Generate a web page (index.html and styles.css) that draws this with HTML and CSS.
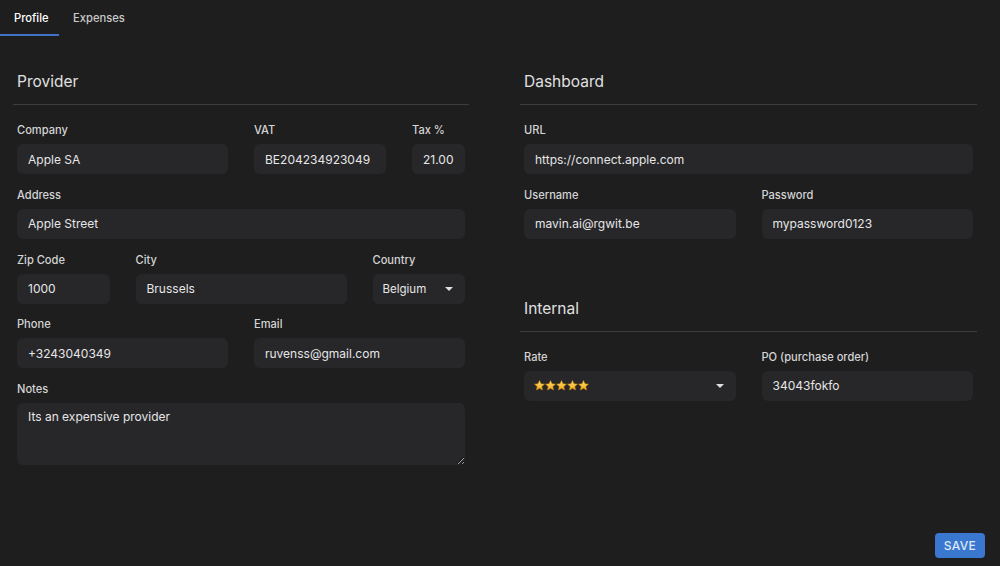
FILE: index.html
```html
<!DOCTYPE html>
<html lang="en">
<head>
<meta charset="utf-8">
<title>Provider</title>
<link rel="stylesheet" href="styles.css">
</head>
<body>
<div class="page">
  <nav class="tabs">
    <div class="tab active">Profile</div>
    <div class="tab">Expenses</div>
  </nav>

  <main class="content">
    <section class="panel">
      <h2 class="section-title">Provider</h2>
      <hr class="divider">
      <div class="grid">
        <div class="field span-6"><label>Company</label><input class="control" value="Apple SA"></div>
        <div class="field span-4"><label>VAT</label><input class="control" value="BE204234923049"></div>
        <div class="field span-2"><label>Tax %</label><input class="control" value="21.00"></div>

        <div class="field span-12"><label>Address</label><input class="control" value="Apple Street"></div>

        <div class="field span-3"><label>Zip Code</label><input class="control" value="1000"></div>
        <div class="field span-6"><label>City</label><input class="control" value="Brussels"></div>
        <div class="field span-3"><label>Country</label>
          <div class="control select"><span>Belgium</span><span class="caret"></span></div>
        </div>

        <div class="field span-6"><label>Phone</label><input class="control" value="+3243040349"></div>
        <div class="field span-6"><label>Email</label><input class="control" value="ruvenss@gmail.com"></div>

        <div class="field span-12"><label>Notes</label><textarea class="control textarea">Its an expensive provider</textarea></div>
      </div>
    </section>

    <section class="panel right">
      <h2 class="section-title">Dashboard</h2>
      <hr class="divider">
      <div class="grid">
        <div class="field span-12"><label>URL</label><input class="control" value="https://connect.apple.com"></div>
        <div class="field span-6"><label>Username</label><input class="control" value="mavin.ai@rgwit.be"></div>
        <div class="field span-6"><label>Password</label><input class="control" value="mypassword0123"></div>
      </div>

      <h2 class="section-title second">Internal</h2>
      <hr class="divider">
      <div class="grid">
        <div class="field span-6"><label>Rate</label>
          <div class="control select">
            <span class="stars">
              <svg viewBox="0 0 12 12" class="star"><defs><linearGradient id="g" x1="0" y1="0" x2="0" y2="1"><stop offset="0" stop-color="#ffe36b"/><stop offset="1" stop-color="#f2a81d"/></linearGradient></defs><path d="M6 .6l1.6 3.5 3.8.4-2.9 2.6.8 3.8L6 9 2.7 10.9l.8-3.8L.6 4.5l3.8-.4z" fill="url(#g)" stroke="#c98a12" stroke-width=".6"/></svg>
              <svg viewBox="0 0 12 12" class="star"><path d="M6 .6l1.6 3.5 3.8.4-2.9 2.6.8 3.8L6 9 2.7 10.9l.8-3.8L.6 4.5l3.8-.4z" fill="url(#g)" stroke="#c98a12" stroke-width=".6"/></svg>
              <svg viewBox="0 0 12 12" class="star"><path d="M6 .6l1.6 3.5 3.8.4-2.9 2.6.8 3.8L6 9 2.7 10.9l.8-3.8L.6 4.5l3.8-.4z" fill="url(#g)" stroke="#c98a12" stroke-width=".6"/></svg>
              <svg viewBox="0 0 12 12" class="star"><path d="M6 .6l1.6 3.5 3.8.4-2.9 2.6.8 3.8L6 9 2.7 10.9l.8-3.8L.6 4.5l3.8-.4z" fill="url(#g)" stroke="#c98a12" stroke-width=".6"/></svg>
              <svg viewBox="0 0 12 12" class="star"><path d="M6 .6l1.6 3.5 3.8.4-2.9 2.6.8 3.8L6 9 2.7 10.9l.8-3.8L.6 4.5l3.8-.4z" fill="url(#g)" stroke="#c98a12" stroke-width=".6"/></svg>
            </span>
            <span class="caret"></span>
          </div>
        </div>
        <div class="field span-6"><label>PO (purchase order)</label><input class="control" value="34043fokfo"></div>
      </div>
    </section>
  </main>

  <footer class="footer">
    <button class="save">SAVE</button>
  </footer>
</div>
</body>
</html>
```

FILE: styles.css
```css
* { box-sizing: border-box; }

html, body {
  margin: 0;
  padding: 0;
  background: #1e1e1f;
  color-scheme: dark;
}

body {
  font-family: Inter, "Noto Sans", sans-serif;
  color: #e2e2e2;
}

.page {
  display: flex;
  flex-direction: column;
  min-height: 100vh;
}

.tabs {
  display: flex;
  height: 36px;
}

.tab {
  padding: 10px 14px 0 14px;
  font-size: 11.2px;
  font-weight: 500;
  line-height: 16px;
  color: #c9c9c9;
}

.tab.active {
  color: #ffffff;
  border-bottom: 2px solid #3f73c6;
  width: 59px;
}

.content {
  display: grid;
  grid-template-columns: 456px 457px;
  column-gap: 51px;
  padding-left: 13px;
}

.panel {
  display: flex;
  flex-direction: column;
}

.section-title {
  margin: 34px 0 0 4px;
  font-size: 15.5px;
  font-weight: 400;
  line-height: 24px;
  color: #e0e0e0;
}

.section-title.second {
  margin-top: 58px;
}

.divider {
  margin: 10px 0 0 0;
  border: 0;
  height: 1px;
  background: #3d3d3f;
}

.grid {
  display: grid;
  grid-template-columns: repeat(12, 1fr);
  column-gap: 26px;
  row-gap: 12.75px;
  padding: 17px 4px 0 4px;
}

.field {
  display: flex;
  flex-direction: column;
  min-width: 0;
}

.span-2 { grid-column: span 2; }
.span-3 { grid-column: span 3; }
.span-4 { grid-column: span 4; }
.span-6 { grid-column: span 6; }
.span-12 { grid-column: span 12; }

.field label {
  font-size: 11.1px;
  line-height: 16px;
  font-weight: 500;
  color: #d4d4d4;
  margin-bottom: 6px;
}

.control {
  height: 30px;
  width: 100%;
  border: 0;
  outline: none;
  border-radius: 6px;
  background: #27272a;
  color: #e6e6e6;
  font-family: inherit;
  font-size: 12px;
  padding: 0 10px 0 11px;
  margin: 0;
}

.textarea {
  height: 62px;
  padding: 5px 11px;
  line-height: 18px;
  resize: vertical;
}

.select {
  display: flex;
  align-items: center;
  justify-content: space-between;
  padding: 0 12px 0 10px;
  font-size: 11.5px;
}

.caret {
  width: 0;
  height: 0;
  border-left: 4px solid transparent;
  border-right: 4px solid transparent;
  border-top: 4px solid #e0e0e0;
}

.stars {
  display: flex;
}

.star {
  width: 11px;
  height: 11px;
}

.footer {
  margin-top: auto;
  display: flex;
  justify-content: flex-end;
  padding: 0 15px 8px 0;
}

.save {
  width: 50px;
  height: 25px;
  border: 0;
  border-radius: 4px;
  background: #3a77cf;
  color: #dfe8f6;
  font-family: inherit;
  font-size: 12px;
  font-weight: 500;
  letter-spacing: 0.3px;
  padding: 0;
}
```
